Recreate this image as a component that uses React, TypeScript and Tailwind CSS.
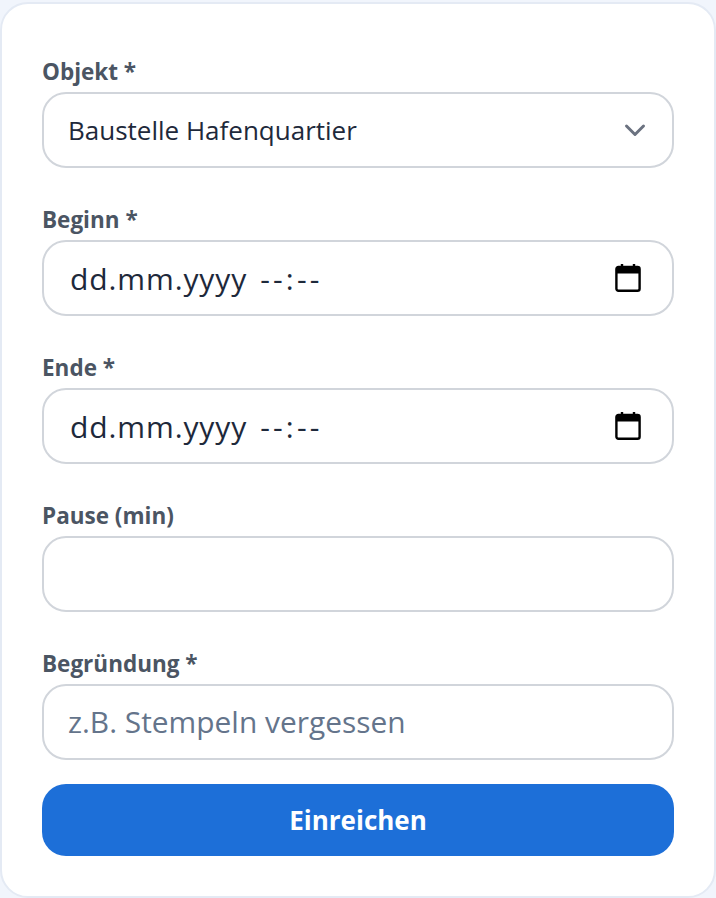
function Cal() {
  return (
    <svg width="26" height="28" viewBox="0 0 26 28" className="shrink-0">
      <path d="M7 0v4M19 0v4" stroke="#000" strokeWidth="2.4" />
      <rect x="1.4" y="3" width="23.2" height="23.8" rx="2" fill="#fff" stroke="#000" strokeWidth="2.4" />
      <rect x="1.4" y="3" width="23.2" height="6.5" fill="#000" />
    </svg>
  );
}
function Label({ children }: { children: string }) {
  return <label className="block h-[32px] text-[22.5px] leading-[24px] font-bold text-[#4b5563]">{children}</label>;
}
function DateField({ label }: { label: string }) {
  return (
    <div className="mb-[40px]">
      <Label>{label}</Label>
      <div className="flex h-[76px] items-center justify-between rounded-[24px] border-2 border-[#d1d5db] bg-white pl-[26px] pr-[31px]">
        <span className="flex gap-[13px] text-[30px] text-[#1e293b]">
          <span className="tracking-[0.9px]">dd.mm.yyyy</span>
          <span className="tracking-[3.2px]">--:--</span>
        </span>
        <Cal />
      </div>
    </div>
  );
}
export default function App() {
  return (
    <div className="h-[898px] w-[716px] bg-[#f1f5fc] pt-[2px] font-['Open_Sans','Noto_Sans',sans-serif]">
      <div className="h-[896px] w-[716px] rounded-[28px] border-2 border-[#e4eaf4] bg-white px-[40px] pt-[56px]">
        <div className="mb-[40px]">
          <Label>Objekt *</Label>
          <div className="flex h-[76px] items-center justify-between rounded-[24px] border-2 border-[#d1d5db] bg-white pl-[24px] pr-[25px]">
            <span className="text-[26px] text-[#1e293b]">Baustelle Hafenquartier</span>
            <svg width="24" height="24" viewBox="0 0 24 24" fill="none" stroke="#6b7280" strokeWidth="3" strokeLinecap="round" strokeLinejoin="round"><path d="M3.5 8l8.5 8.5 8.5-8.5" /></svg>
          </div>
        </div>
        <DateField label="Beginn *" />
        <DateField label="Ende *" />
        <div className="mb-[40px]">
          <Label>Pause (min)</Label>
          <div className="h-[76px] rounded-[24px] border-2 border-[#d1d5db] bg-white" />
        </div>
        <div>
          <Label>Begründung *</Label>
          <div className="flex h-[76px] items-center rounded-[24px] border-2 border-[#d1d5db] bg-white pl-[24px]">
            <span className="text-[29.9px] text-[#64748b]">z.B. Stempeln vergessen</span>
          </div>
        </div>
        <button className="mt-[24px] flex h-[72px] w-full items-center justify-center rounded-[24px] bg-[#1d6fd8] text-[26px] font-bold text-white">Einreichen</button>
      </div>
    </div>
  );
}
